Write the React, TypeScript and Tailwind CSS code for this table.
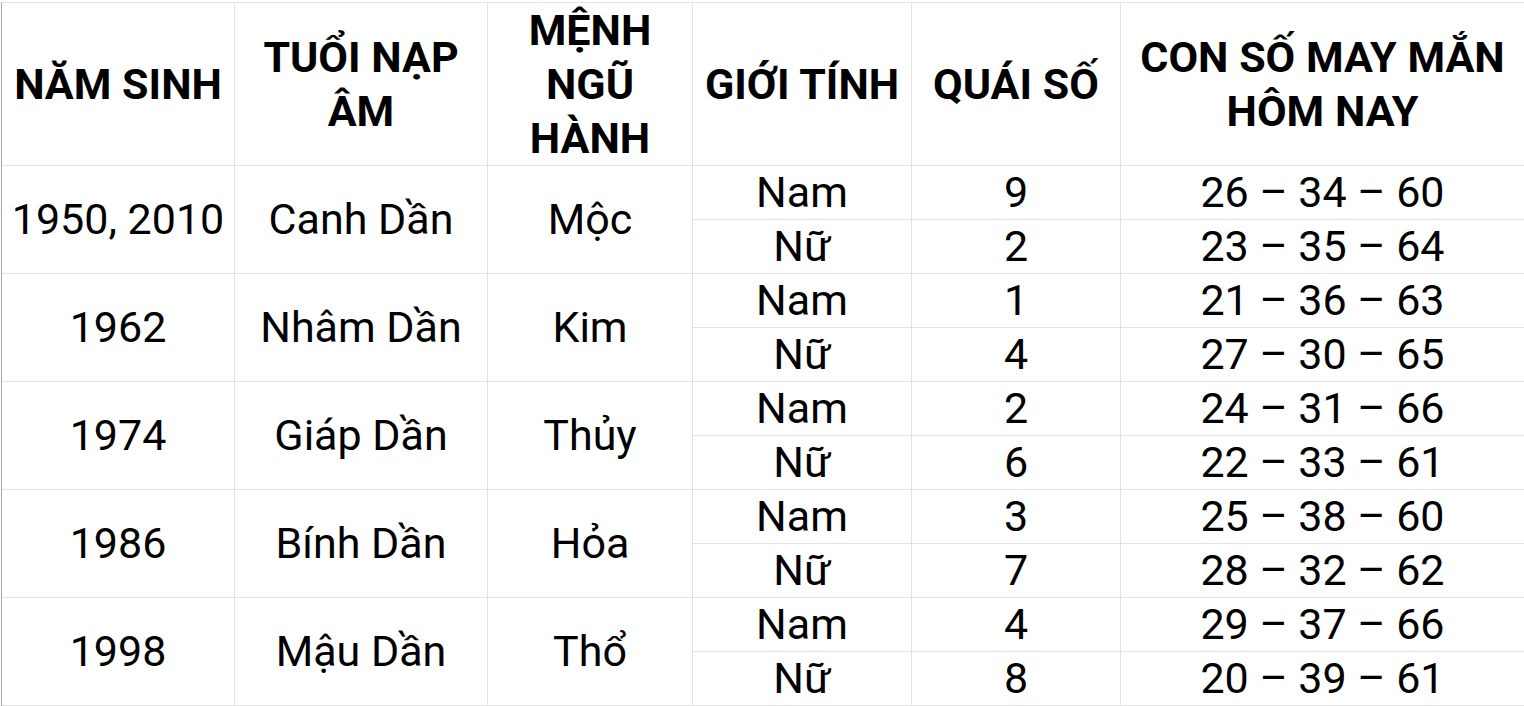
const headers = ["NĂM SINH", "TUỔI NẠP ÂM", "MỆNH NGŨ HÀNH", "GIỚI TÍNH", "QUÁI SỐ", "CON SỐ MAY MẮN HÔM NAY"];

const groups = [
  { year: "1950, 2010", napAm: "Canh Dần", menh: "Mộc", rows: [["Nam", "9", "26 – 34 – 60"], ["Nữ", "2", "23 – 35 – 64"]] },
  { year: "1962", napAm: "Nhâm Dần", menh: "Kim", rows: [["Nam", "1", "21 – 36 – 63"], ["Nữ", "4", "27 – 30 – 65"]] },
  { year: "1974", napAm: "Giáp Dần", menh: "Thủy", rows: [["Nam", "2", "24 – 31 – 66"], ["Nữ", "6", "22 – 33 – 61"]] },
  { year: "1986", napAm: "Bính Dần", menh: "Hỏa", rows: [["Nam", "3", "25 – 38 – 60"], ["Nữ", "7", "28 – 32 – 62"]] },
  { year: "1998", napAm: "Mậu Dần", menh: "Thổ", rows: [["Nam", "4", "29 – 37 – 66"], ["Nữ", "8", "20 – 39 – 61"]] },
];

const cell = "flex items-center justify-center text-center border-r border-b border-[#e2e2e2]";
const firstRows = ["row-start-2", "row-start-4", "row-start-6", "row-start-8", "row-start-10"];
const secondRows = ["row-start-3", "row-start-5", "row-start-7", "row-start-9", "row-start-11"];

export default function App() {
  return (
    <div className="w-[1524px] h-[706px] overflow-hidden bg-white pt-[2px] pl-[1px]" style={{ fontFamily: "Roboto, 'Noto Sans', sans-serif" }}>
      <div className="grid grid-cols-[233px_253px_205px_219px_209px_404px] grid-rows-[163px_repeat(10,54px)] border-l border-t border-l-[#a6a6a6] border-t-[#e2e2e2] text-black">
        {headers.map((h) => (
          <div key={h} className={`${cell} px-1 text-[43px] leading-[54px] font-bold`}>
            {h}
          </div>
        ))}
        {groups.map((g, gi) => (
          <Group key={g.year} g={g} idx={gi} />
        ))}
      </div>
    </div>
  );
}

function Group({ g, idx }: { g: (typeof groups)[number]; idx: number }) {
  const r1 = firstRows[idx];
  const r2 = secondRows[idx];
  return (
    <>
      <div className={`${cell} ${r1} row-span-2 col-start-1 text-[43px]`}>{g.year}</div>
      <div className={`${cell} ${r1} row-span-2 col-start-2 text-[43px]`}>{g.napAm}</div>
      <div className={`${cell} ${r1} row-span-2 col-start-3 text-[43px]`}>{g.menh}</div>
      {g.rows.map((r, i) => (
        <div key={i} className="contents">
          <div className={`${cell} ${i === 0 ? r1 : r2} col-start-4 text-[43px]`}>{r[0]}</div>
          <div className={`${cell} ${i === 0 ? r1 : r2} col-start-5 text-[43px]`}>{r[1]}</div>
          <div className={`${cell} ${i === 0 ? r1 : r2} col-start-6 text-[43px]`}>{r[2]}</div>
        </div>
      ))}
    </>
  );
}
